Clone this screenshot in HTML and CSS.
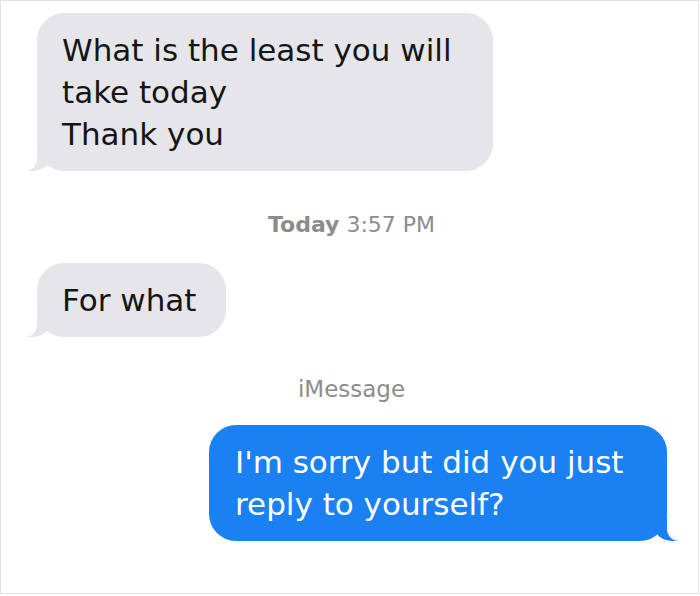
FILE: index.html
```html
<!DOCTYPE html>
<html lang="en">
<head>
<meta charset="utf-8">
<title>Messages</title>
<link rel="stylesheet" href="styles.css">
</head>
<body>
<main class="thread">
  <div class="bubble incoming first">What is the least you will take today<br>Thank you</div>
  <div class="stamp"><b>Today</b> 3:57 PM</div>
  <div class="bubble incoming second">For what</div>
  <div class="service">iMessage</div>
  <div class="bubble outgoing">I'm sorry but did you just reply to yourself?</div>
</main>
</body>
</html>
```
FILE: styles.css
```css
html, body {
  margin: 0;
  padding: 0;
  background: #fff;
}

.thread {
  box-sizing: border-box;
  width: 699px;
  height: 594px;
  border: 1px solid #e2e2e2;
  display: flex;
  flex-direction: column;
  align-items: flex-start;
  font-family: "DejaVu Sans", "Liberation Sans", sans-serif;
  overflow: hidden;
}

.bubble {
  position: relative;
  box-sizing: border-box;
  padding: 16px 30px 16px 25px;
  border-radius: 27px;
  font-size: 31px;
  line-height: 42px;
}

.incoming {
  background: #e5e5ea;
  color: #151515;
  margin-left: 36px;
  max-width: 456px;
}

.first {
  margin-top: 12px;
}

.second {
  margin-top: 25px;
}

.outgoing {
  align-self: flex-end;
  margin-right: 31px;
  margin-top: 23px;
  max-width: 458px;
  padding-left: 26px;
  background: #1b80f2;
  color: #fff;
}

/* bubble tails */
.bubble::before,
.bubble::after {
  content: "";
  position: absolute;
  bottom: 0;
  height: 24px;
}

.incoming::before {
  left: -10px;
  width: 24px;
  background: #e5e5ea;
  border-bottom-right-radius: 18px 15px;
}

.incoming::after {
  left: -26px;
  width: 26px;
  background: #fff;
  border-bottom-right-radius: 12px;
}

.outgoing::before {
  right: -13px;
  width: 26px;
  background: #1b80f2;
  border-bottom-left-radius: 18px 15px;
}

.outgoing::after {
  right: -28px;
  width: 28px;
  background: #fff;
  border-bottom-left-radius: 12px;
}

.stamp,
.service {
  align-self: center;
  color: #8c8c8c;
  line-height: 26px;
}

.stamp {
  margin-top: 41px;
  margin-left: 4px;
  font-size: 22px;
}

.stamp b {
  font-weight: 700;
}

.service {
  margin-top: 39px;
  margin-left: 4px;
  font-size: 23px;
}
```
